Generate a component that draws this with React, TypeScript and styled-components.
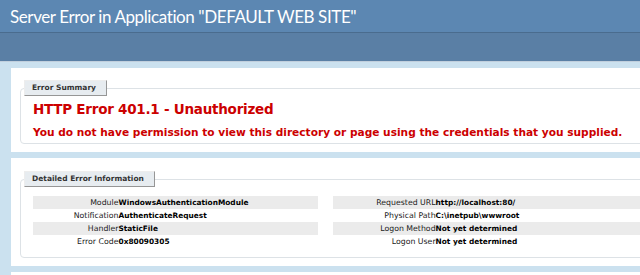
import React from 'react'
import styled, { createGlobalStyle } from 'styled-components';

const GlobalStyle = createGlobalStyle`
  body {
    margin: 0;
    background: #CBE1EF;
    font-family: "DejaVu Sans", Verdana, sans-serif;
    overflow: hidden;
  }
`;

const Header = styled.h1`
  margin: 0;
  height: 32px;
  padding-left: 10px;
  background: #5C87B2;
  color: #FFF;
  font-family: Lato, "Trebuchet MS", sans-serif;
  font-size: 17px;
  letter-spacing: -0.4px;
  font-weight: 400;
  line-height: 33px;
  white-space: nowrap;
`;

const ServerVersion = styled.div`
  height: 28px;
  background: #5A7FA5;
  border-top: 1px solid #4A6C8E;
  border-bottom: 1px solid #C1CFDD;
`;

const Content = styled.div`
  display: flex;
  flex-direction: column;
  gap: 6px;
  padding: 6px 0 0 11px;
`;

const Panel = styled.div<{ $top: number; $bottom: number }>`
  width: 900px;
  background: #FFF;
  padding: ${p => p.$top}px 0 ${p => p.$bottom}px 9px;
`;

const Fieldset = styled.fieldset<{ $bottom: number }>`
  margin: 0;
  width: 860px;
  box-sizing: border-box;
  padding: 0 12px ${p => p.$bottom}px 12px;
  border: 1px solid #DDE2E6;
  border-radius: 4px;
`;

const Legend = styled.legend`
  margin-left: -9px;
  padding: 0 10px 0 7px;
  height: 16px;
  box-sizing: border-box;
  background: #E7ECF0;
  border-top: 1px solid #EDEDED;
  border-left: 1px solid #EDEDED;
  border-right: 1px solid #969696;
  border-bottom: 1px solid #969696;
  color: #333;
  font-size: 7.5px;
  font-weight: 700;
  line-height: 14px;
`;

const ErrorTitle = styled.h2`
  margin: 3px 0 0 0;
  color: #CC0000;
  font-size: 13.5px;
  letter-spacing: -0.25px;
  font-weight: 700;
  line-height: 20px;
  white-space: nowrap;
`;

const ErrorText = styled.h3`
  margin: 6px 0 0 0;
  color: #CC0000;
  font-size: 10.6px;
  font-weight: 700;
  line-height: 14px;
  white-space: nowrap;
`;

const Details = styled.div`
  display: grid;
  grid-template-columns: 285px 513px;
  column-gap: 15px;
  margin-top: 9px;
`;

const InfoTable = styled.div`
  display: flex;
  flex-direction: column;
`;

const InfoRow = styled.div<{ $alt: boolean; $label: string }>`
  display: grid;
  grid-template-columns: ${p => p.$label} 1fr;
  height: 13px;
  background: ${p => (p.$alt ? '#EBEBEB' : 'transparent')};
  line-height: 13px;
  white-space: nowrap;
`;

const InfoLabel = styled.span`
  text-align: right;
  color: #222;
  font-size: 7.8px;
  font-weight: 400;
`;

const InfoValue = styled.span`
  color: #000;
  font-size: 7.4px;
  font-weight: 700;
`;

const leftRows = [
  ['Module', 'WindowsAuthenticationModule'],
  ['Notification', 'AuthenticateRequest'],
  ['Handler', 'StaticFile'],
  ['Error Code', '0x80090305'],
];

const rightRows = [
  ['Requested URL', 'http://localhost:80/'],
  ['Physical Path', 'C:\\inetpub\\wwwroot'],
  ['Logon Method', 'Not yet determined'],
  ['Logon User', 'Not yet determined'],
];

function App() {
  return (
    <>
      <GlobalStyle />
      <Header>Server Error in Application "DEFAULT WEB SITE"</Header>
      <ServerVersion />
      <Content>
        <Panel $top={12} $bottom={8}>
          <Fieldset $bottom={4}>
            <Legend>Error Summary</Legend>
            <ErrorTitle>HTTP Error 401.1 - Unauthorized</ErrorTitle>
            <ErrorText>You do not have permission to view this directory or page using the credentials that you supplied.</ErrorText>
          </Fieldset>
        </Panel>
        <Panel $top={13} $bottom={8}>
          <Fieldset $bottom={9}>
            <Legend>Detailed Error Information</Legend>
            <Details>
              <InfoTable>
                {leftRows.map(([k, v], i) => (
                  <InfoRow key={k} $alt={i % 2 === 0} $label="30%">
                    <InfoLabel>{k}</InfoLabel>
                    <InfoValue>{v}</InfoValue>
                  </InfoRow>
                ))}
              </InfoTable>
              <InfoTable>
                {rightRows.map(([k, v], i) => (
                  <InfoRow key={k} $alt={i % 2 === 0} $label="20%">
                    <InfoLabel>{k}</InfoLabel>
                    <InfoValue>{v}</InfoValue>
                  </InfoRow>
                ))}
              </InfoTable>
            </Details>
          </Fieldset>
        </Panel>
        <Panel $top={10} $bottom={10} />
      </Content>
    </>
  )
}

export default App
